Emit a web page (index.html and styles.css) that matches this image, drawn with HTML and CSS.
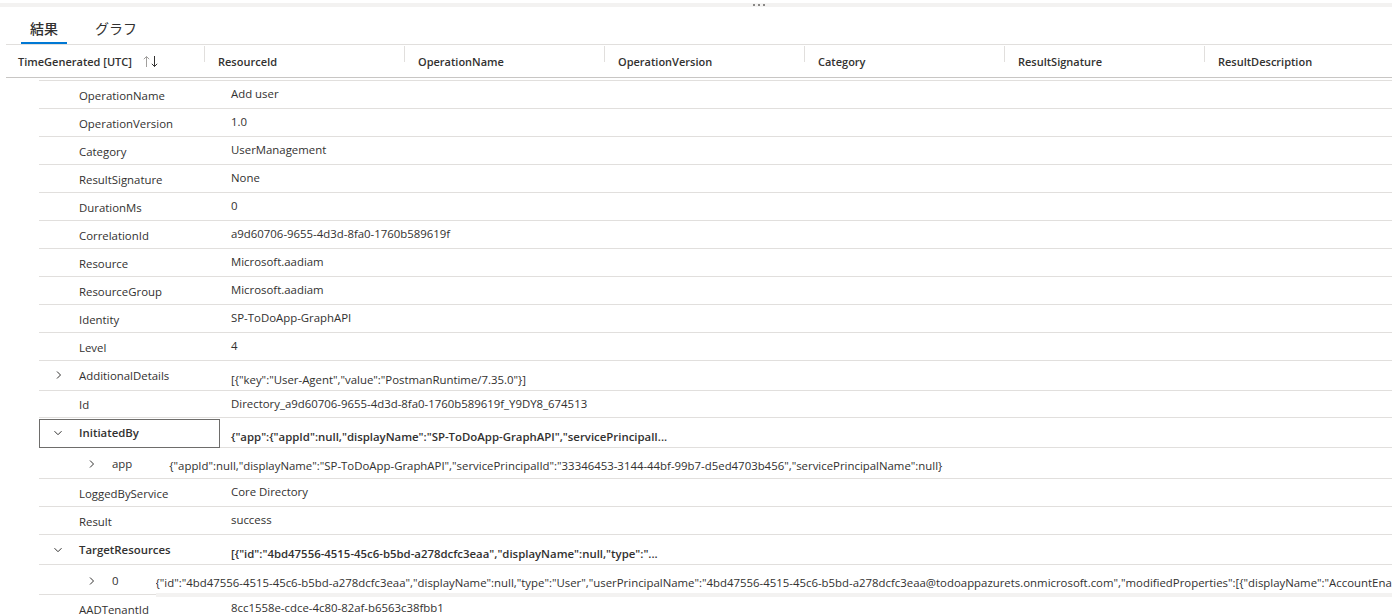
FILE: index.html
```html
<!DOCTYPE html>
<html lang="ja">
<head>
<meta charset="utf-8">
<title>結果</title>
<link rel="stylesheet" href="styles.css">
</head>
<body>
<div class="topbar"><div class="grip"><i></i><i></i><i></i></div></div>
<div class="tabs">
  <div class="tab active">結果</div>
  <div class="tab">グラフ</div>
</div>
<div class="thead">
  <div class="th first">TimeGenerated [UTC]
    <svg class="sort" width="16" height="13" viewBox="0 0 16 13"><path class="up" d="M3.5 12V1.5M0.8 4.2L3.5 1.5L6.2 4.2"/><path class="down" d="M11.5 1V11.5M8.8 8.8L11.5 11.5L14.2 8.8"/></svg>
  </div>
  <div class="th">ResourceId</div>
  <div class="th">OperationName</div>
  <div class="th">OperationVersion</div>
  <div class="th">Category</div>
  <div class="th">ResultSignature</div>
  <div class="th last">ResultDescription</div>
</div>
<div class="details">
  <div class="row"><div class="kc"><span class="chev"></span><span class="key">OperationName</span></div><div class="val">Add user</div></div>
  <div class="row"><div class="kc"><span class="chev"></span><span class="key">OperationVersion</span></div><div class="val">1.0</div></div>
  <div class="row"><div class="kc"><span class="chev"></span><span class="key">Category</span></div><div class="val">UserManagement</div></div>
  <div class="row"><div class="kc"><span class="chev"></span><span class="key">ResultSignature</span></div><div class="val">None</div></div>
  <div class="row"><div class="kc"><span class="chev"></span><span class="key">DurationMs</span></div><div class="val">0</div></div>
  <div class="row"><div class="kc"><span class="chev"></span><span class="key">CorrelationId</span></div><div class="val">a9d60706-9655-4d3d-8fa0-1760b589619f</div></div>
  <div class="row"><div class="kc"><span class="chev"></span><span class="key">Resource</span></div><div class="val">Microsoft.aadiam</div></div>
  <div class="row"><div class="kc"><span class="chev"></span><span class="key">ResourceGroup</span></div><div class="val">Microsoft.aadiam</div></div>
  <div class="row"><div class="kc"><span class="chev"></span><span class="key">Identity</span></div><div class="val">SP-ToDoApp-GraphAPI</div></div>
  <div class="row"><div class="kc"><span class="chev"></span><span class="key">Level</span></div><div class="val">4</div></div>
  <div class="row exp r-add"><div class="kc"><span class="chev"><svg width="8" height="10" viewBox="0 0 8 10"><path d="M2 1.5L5.5 5L2 8.5"/></svg></span><span class="key">AdditionalDetails</span></div><div class="val">[{"key":"User-Agent","value":"PostmanRuntime/7.35.0"}]</div></div>
  <div class="row r-id"><div class="kc"><span class="chev"></span><span class="key">Id</span></div><div class="val">Directory_a9d60706-9655-4d3d-8fa0-1760b589619f_Y9DY8_674513</div></div>
  <div class="row exp focused"><div class="kc"><span class="chev"><svg width="10" height="8" viewBox="0 0 10 8"><path d="M1.5 2.2L5 5.7L8.5 2.2"/></svg></span><span class="key bold">InitiatedBy</span></div><div class="val bold">{"app":{"appId":null,"displayName":"SP-ToDoApp-GraphAPI","servicePrincipalI...</div></div>
  <div class="row nested r-app"><div class="kc"><span class="chev"><svg width="8" height="10" viewBox="0 0 8 10"><path d="M2 1.5L5.5 5L2 8.5"/></svg></span><span class="key">app</span></div><div class="val">{"appId":null,"displayName":"SP-ToDoApp-GraphAPI","servicePrincipalId":"33346453-3144-44bf-99b7-d5ed4703b456","servicePrincipalName":null}</div></div>
  <div class="row"><div class="kc"><span class="chev"></span><span class="key">LoggedByService</span></div><div class="val">Core Directory</div></div>
  <div class="row"><div class="kc"><span class="chev"></span><span class="key">Result</span></div><div class="val">success</div></div>
  <div class="row exp"><div class="kc"><span class="chev"><svg width="10" height="8" viewBox="0 0 10 8"><path d="M1.5 2.2L5 5.7L8.5 2.2"/></svg></span><span class="key bold">TargetResources</span></div><div class="val bold">[{"id":"4bd47556-4515-45c6-b5bd-a278dcfc3eaa","displayName":null,"type":"...</div></div>
  <div class="row nested r-zero"><div class="kc"><span class="chev"><svg width="8" height="10" viewBox="0 0 8 10"><path d="M2 1.5L5.5 5L2 8.5"/></svg></span><span class="key">0</span></div><div class="val scroll"><span class="clip">{"id":"4bd47556-4515-45c6-b5bd-a278dcfc3eaa","displayName":null,"type":"User","userPrincipalName":"4bd47556-4515-45c6-b5bd-a278dcfc3eaa@todoappazurets.onmicrosoft.com","modifiedProperties":[{"displayName":"AccountEnabled","oldValue":null,"newValue":"[true]"}]}</span><div class="track"></div></div></div>
  <div class="row"><div class="kc"><span class="chev"></span><span class="key">AADTenantId</span></div><div class="val">8cc1558e-cdce-4c80-82af-b6563c38fbb1</div></div>
</div>
</body>
</html>
```

FILE: styles.css
```css
html, body {
  margin: 0;
  padding: 0;
}
body {
  width: 1392px;
  height: 615px;
  overflow: hidden;
  background: #ffffff;
  color: #323130;
  font-family: "Open Sans", "Noto Sans CJK JP", sans-serif;
  font-size: 11.4px;
  white-space: nowrap;
}

.topbar {
  margin-top: 3px;
  height: 4px;
  background: #f3f2f1;
  display: flex;
}
.grip {
  margin-left: 753px;
  padding-top: 1px;
  display: flex;
  gap: 3px;
}
.grip i {
  display: block;
  width: 2px;
  height: 2px;
  background: #8a8886;
}

.tabs {
  margin-left: 6px;
  height: 37px;
  border-bottom: 1px solid #e1dfdd;
  display: flex;
  padding-left: 15px;
  gap: 19px;
}
.tab {
  height: 37px;
  box-sizing: border-box;
  padding: 4px 9px 0;
  display: flex;
  align-items: center;
  font-family: "Noto Sans CJK JP", "Open Sans", sans-serif;
  font-size: 14px;
  color: #323130;
}
.tab.active {
  box-shadow: inset 0 -2px 0 #0078d4;
  font-weight: 500;
}

.thead {
  margin-left: 6px;
  height: 32px;
  border-bottom: 1px solid #c8c6c4;
  display: flex;
  align-items: center;
  font-weight: 600;
  font-size: 11px;
}
.th {
  position: relative;
  width: 200px;
  box-sizing: border-box;
  padding-left: 13px;
  display: flex;
  align-items: center;
}
.th.first {
  width: 199px;
  padding-left: 12px;
}
.th.last {
  width: auto;
}
.th::after {
  content: "";
  position: absolute;
  right: 0;
  top: -8px;
  width: 1px;
  height: 16px;
  background: #e1dfdd;
}
.th.last::after { display: none; }
.sort {
  margin-left: 11px;
  fill: none;
  stroke-width: 1;
}
.sort .up { stroke: #a19f9d; }
.sort .down { stroke: #323130; }

.details {
  margin-left: 39px;
  margin-top: 2px;
  border-top: 1px solid #e1dfdd;
}
.row {
  display: flex;
  align-items: flex-start;
  height: 27px;
  border-bottom: 1px solid #e1dfdd;
  line-height: 16px;
}
.kc {
  width: 192px;
  flex: none;
  display: flex;
  align-items: flex-start;
  box-sizing: border-box;
  padding-top: 7px;
}
.chev {
  width: 40px;
  height: 16px;
  flex: none;
  display: flex;
  align-items: center;
  padding-left: 15px;
  box-sizing: border-box;
}
.chev svg {
  fill: none;
  stroke: #323130;
  stroke-width: 1;
}
.val {
  padding-top: 5px;
}
.bold {
  font-weight: 600;
}

.exp { height: 29px; }
.exp .kc { padding-top: 7px; }
.exp .chev { padding-left: 14px; }
.exp .val { padding-top: 11px; }

.r-add .chev { padding-left: 16px; margin-top: -1px; }

.r-id { height: 26px; }
.r-id .kc { padding-top: 6px; }
.r-id .val { padding-top: 5px; }

.focused .kc {
  width: 181px;
  height: 29px;
  margin-top: 1px;
  margin-bottom: -1px;
  margin-right: 11px;
  border: 1px solid #6e6d6b;
  padding-top: 5px;
}
.focused .chev { width: 39px; padding-left: 13px; }

.nested { height: 30px; }
.nested .kc {
  width: auto;
  padding-top: 8px;
}
.nested .chev {
  width: 73px;
  padding-left: 49px;
}
.nested .val {
  margin-left: 37px;
  padding-top: 10px;
}

.r-zero { height: 29px; }
.val.scroll {
  flex: 1;
  min-width: 0;
  height: 29px;
  box-sizing: border-box;
  display: flex;
  flex-direction: column;
}
.clip {
  display: block;
  overflow: hidden;
}
.track {
  margin-top: auto;
  margin-bottom: -3px;
  height: 4px;
  background: #f3f2f1;
}
```
